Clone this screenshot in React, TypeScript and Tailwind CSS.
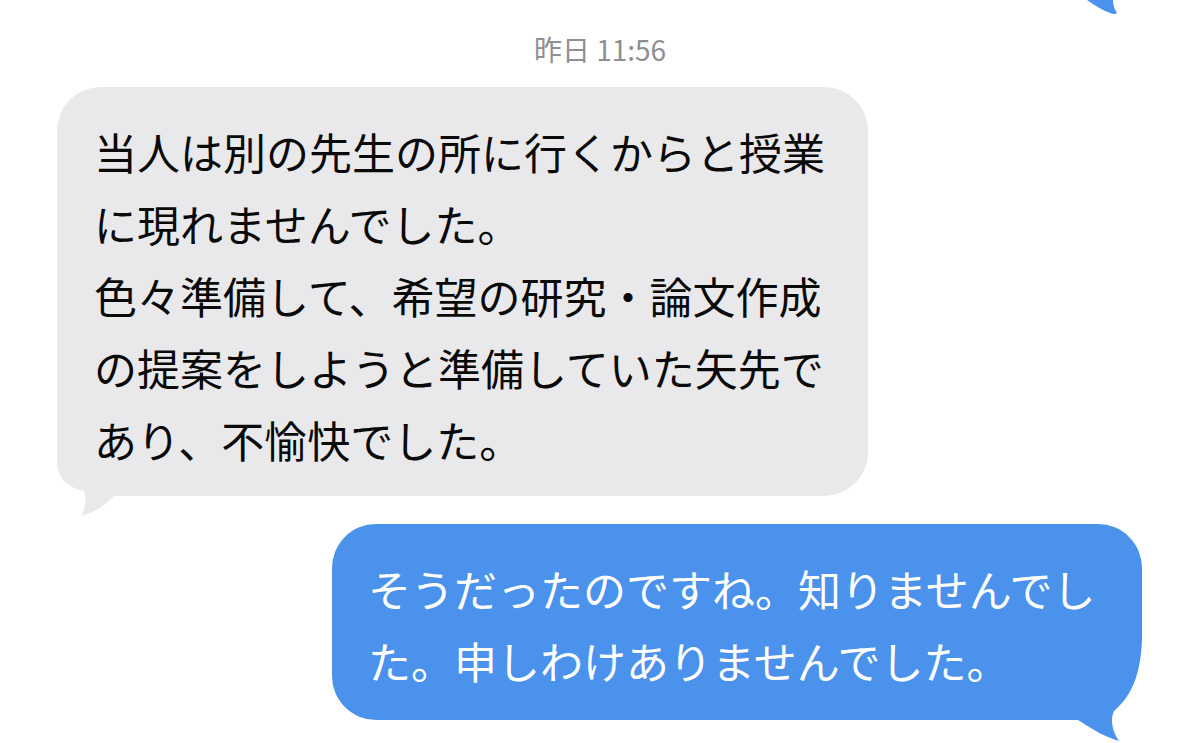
import React from "react";

const FONT = '"Noto Sans CJK JP", "Noto Sans", sans-serif';

const grayLines = [
  "当人は別の先生の所に行くからと授業",
  "に現れませんでした。",
  "色々準備して、希望の研究・論文作成",
  "の提案をしようと準備していた矢先で",
  "あり、不愉快でした。",
];

const blueLines = [
  "そうだったのですね。知りませんでし",
  "た。申しわけありませんでした。",
];

export default function App() {
  return (
    <div
      className="w-[1200px] h-[743px] bg-white overflow-hidden flex flex-col"
      style={{ fontFamily: FONT }}
    >
      {/* tail of previous outgoing bubble */}
      <div className="h-[15px] flex justify-end pr-[80px]">
        <svg width="36" height="15" viewBox="0 0 36 15">
          <path
            d="M3 0 L29 0 C29 6, 31 10, 33 13 C31 14.5, 29 14, 26 13 C18 10, 10 5, 3 0 Z"
            fill="#4a92ec"
          />
        </svg>
      </div>

      {/* timestamp */}
      <div className="mt-[17px] h-[34px] text-[28px] leading-[34px] text-[#8e8e93] text-center">
        昨日 11:56
      </div>

      {/* incoming gray bubble */}
      <div className="mt-[21px] ml-[57px] w-[811px]">
        <div className="relative bg-[#e9e9eb] rounded-[44px] rounded-bl-[60px] pl-[37px] pr-[30px] pt-[28px] pb-[21px] text-[43px] leading-[72px] text-[#0a0a0a]">
          <svg
            className="absolute left-[-4px] bottom-[-24px]"
            width="80"
            height="84"
            viewBox="0 0 80 84"
          >
            <path
              d="M4 0 L4 25 C4 41, 13 51, 31 55 C33 63, 33 73, 28 80 C39 77, 51 71, 61 60 L80 60 L80 0 Z"
              fill="#e9e9eb"
            />
          </svg>
          {grayLines.map((l, i) => (
            <div key={i} className="relative whitespace-nowrap">
              {l}
            </div>
          ))}
        </div>
      </div>

      {/* outgoing blue bubble */}
      <div className="mt-[28px] flex justify-end pr-[58px]">
        <div className="relative w-[810px] bg-[#4a92ec] rounded-[44px] rounded-br-[86px] pl-[36px] pr-[30px] pt-[28px] pb-[24px] text-[43px] leading-[72px] text-white">
          <svg
            className="absolute right-[-4px] bottom-[-24px]"
            width="100"
            height="145"
            viewBox="0 0 100 145"
          >
            <path
              d="M96 0 L96 35 C96 80, 82 100, 68 112 C64 120, 66 132, 73 142 C59 138, 46 130, 32 121 L4 121 L4 0 Z"
              fill="#4a92ec"
            />
          </svg>
          {blueLines.map((l, i) => (
            <div key={i} className="relative whitespace-nowrap">
              {l}
            </div>
          ))}
        </div>
      </div>
    </div>
  );
}
